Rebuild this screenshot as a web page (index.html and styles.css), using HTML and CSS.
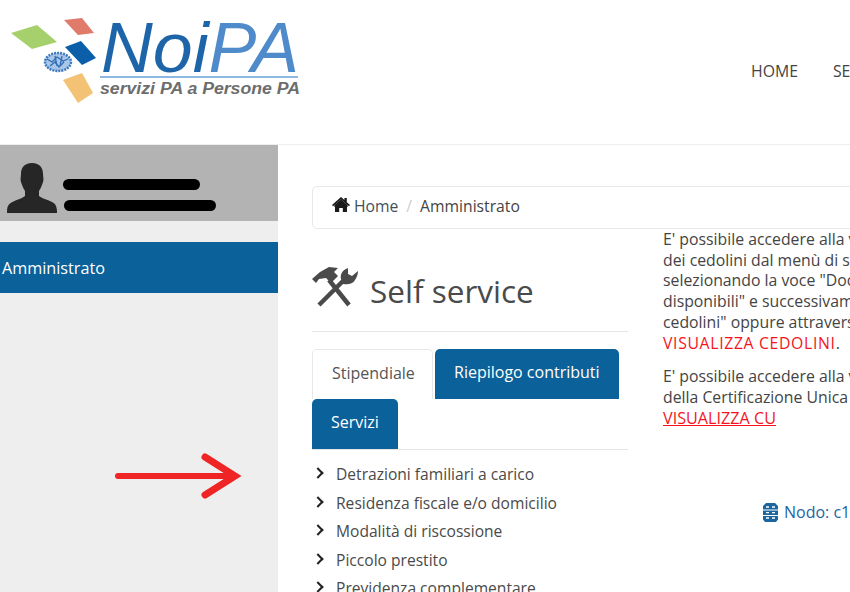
FILE: index.html
```html
<!DOCTYPE html>
<html lang="it">
<head>
<meta charset="utf-8">
<title>NoiPA - Self service</title>
<link rel="stylesheet" href="styles.css">
</head>
<body>
<header class="topbar">
  <svg class="logo" width="310" height="110" viewBox="0 0 310 110" aria-label="NoiPA">
    <polygon points="11,33 37,25 57,42 32,49" fill="#a5d06c"/>
    <polygon points="64,20 82,18 94,33 78,35" fill="#e07b6c"/>
    <polygon points="65,47 81,41 96,58 82,65" fill="#0b5ea8"/>
    <polygon points="63,80 82,73 93,93 78,103" fill="#f3c274"/>
    <ellipse cx="58" cy="62" rx="13" ry="9" fill="#a9c6e8" stroke="#3f78bd" stroke-width="2.500" stroke-dasharray="2 1"/>
    <path d="M47 59l5 3 5-5 6 4 5-2M50 66l5-4 4 5 5-5M55 56l2 10M62 56l-2 10" fill="none" stroke="#2f6cb5" stroke-width="1.300"/>
    <text class="logo-name" x="101" y="72" textLength="198" lengthAdjust="spacingAndGlyphs"><tspan class="logo-noi">Noi</tspan><tspan class="logo-pa">PA</tspan></text>
    <rect x="100" y="76" width="198" height="2" fill="#8db8e4"/>
    <text class="logo-tag" x="100" y="94" textLength="200" lengthAdjust="spacingAndGlyphs">servizi PA a Persone PA</text>
  </svg>
  <nav class="topnav">
    <a>HOME</a>
    <a>SERVIZI</a>
  </nav>
</header>

<div class="layout">
  <aside class="sidebar">
    <div class="profile">
      <svg class="avatar" width="50" height="50" viewBox="0 0 50 50">
        <path d="M25 0c8 0 11 5 11 11 0 3 1 5 0 8-1 3-2 6-4 9v5c3 3 16 5 17 10 1 3 1 5 1 7H0c0-3 0-5 1-7 2-5 14-7 17-10v-5c-2-3-3-6-4-9-1-3 0-5 0-8C14 5 17 0 25 0z" fill="#262626"/>
      </svg>
      <div class="redacted">
        <span class="bar bar-name"></span>
        <span class="bar bar-role"></span>
      </div>
    </div>
    <a class="side-item">Amministrato</a>
  </aside>

  <main class="content">
    <div class="breadcrumb">
      <svg class="home-icon" width="18" height="15" viewBox="0 0 18 15">
        <path d="M9 0l3.400 3V1h2.400v4.200L18 8l-1 1.200L9 2.400 1 9.200 0 8zM3 9l6-5 6 5v6h-4.200v-4H7.200v4H3z" fill="#1a1a1a"/>
        <path d="M9 2.400L2.400 8v2h13.200V8z" fill="#1a1a1a"/>
      </svg>
      <a class="crumb-link">Home</a>
      <span class="crumb-sep">/</span>
      <span class="crumb-current">Amministrato</span>
    </div>

    <div class="columns">
      <section class="left-col">
        <h1 class="title">
          <svg class="tools-icon" width="46" height="41" viewBox="0 0 46 41">
            <path d="M0 12l8-7 9-5 9 1-4 4 4 4-7 7-5-5-7 1-3 4z" fill="#4a4a4a"/>
            <path d="M17 13l20 25M7 38l25-25" fill="none" stroke="#4a4a4a" stroke-width="4.500"/>
            <path d="M36 1C30 3 28 8 29 12l2 5c5 1 10 0 12-4 2-3 3-6 3-9l-6 5-4-2z" fill="#4a4a4a"/>
          </svg>
          <span>Self service</span>
        </h1>
        <div class="tabs">
          <a class="tab tab-active">Stipendiale</a>
          <a class="tab tab-blue tab-wide">Riepilogo contributi</a>
          <a class="tab tab-blue">Servizi</a>
        </div>
        <ul class="links">
          <li>Detrazioni familiari a carico</li>
          <li>Residenza fiscale e/o domicilio</li>
          <li>Modalità di riscossione</li>
          <li>Piccolo prestito</li>
          <li>Previdenza complementare</li>
        </ul>
      </section>

      <section class="right-col">
        <p class="para">E' possibile accedere alla visualizzazione<br>dei cedolini dal menù di sinistra<br>selezionando la voce "Documenti<br>disponibili" e successivamente "I miei<br>cedolini" oppure attraverso il link<br><a class="red-link wide-link">VISUALIZZA CEDOLINI</a>.</p>
        <p class="para">E' possibile accedere alla visualizzazione<br>della Certificazione Unica attraverso il link<br><a class="red-link underlined">VISUALIZZA CU</a></p>
        <div class="node">
          <svg class="node-icon" width="15" height="19" viewBox="0 0 15 19">
            <path d="M3 0h9l3 3v3.500H0V3zM0 7.500h15V12H0zM0 13h15v3.500L13 19H2l-2-2.500z" fill="#1d659f"/>
            <path d="M3 4h3M9 4h3M3 9.700h3M9 9.700h3M3 15h3M9 15h3" stroke="#fff" stroke-width="1.300"/>
          </svg>
          <span>Nodo: c1</span>
        </div>
      </section>
    </div>
  </main>

  <svg class="arrow" width="130" height="48" viewBox="0 0 130 48">
    <path d="M6 24h117" fill="none" stroke="#ee2524" stroke-width="6" stroke-linecap="round"/>
    <path d="M93 5l30 19-30 19" fill="none" stroke="#ee2524" stroke-width="7" stroke-linecap="round"/>
  </svg>
</div>
</body>
</html>
```

FILE: styles.css
```css
* {
  box-sizing: border-box;
}

html,
body {
  margin: 0;
  height: 592px;
  overflow: hidden;
  background: #fff;
}

body {
  width: 850px;
  font-family: "Open Sans", "Liberation Sans", sans-serif;
  font-size: 15.600px;
  color: #4a4a4a;
}

.topbar {
  display: flex;
  height: 144px;
  white-space: nowrap;
}

.logo {
  flex: none;
  display: block;
}

.logo-name {
  font-family: "Liberation Sans", sans-serif;
  font-style: italic;
  font-size: 70px;
}

.logo-noi {
  fill: #1d65a8;
}

.logo-pa {
  fill: #4f8acb;
}

.logo-tag {
  font-family: "Liberation Sans", sans-serif;
  font-style: italic;
  font-weight: 700;
  font-size: 16px;
  fill: #6d6d6d;
}

.topnav {
  display: flex;
  gap: 35px;
  margin-left: 441px;
  padding-top: 60px;
  font-size: 15.800px;
  color: #444;
}

.layout {
  position: relative;
  display: flex;
  height: 448px;
  border-top: 1px solid #eee;
}

.sidebar {
  flex: none;
  width: 278px;
  background: #eee;
}

.profile {
  display: flex;
  height: 76px;
  padding: 18px 0 0 7px;
  background: #b3b3b3;
}

.avatar {
  flex: none;
  display: block;
}

.redacted {
  display: flex;
  flex-direction: column;
  gap: 10px;
  margin-left: 6px;
  padding-top: 16px;
}

.bar {
  display: block;
  height: 11px;
  border-radius: 6px;
  background: #000;
}

.bar-name {
  width: 137px;
}

.bar-role {
  width: 152px;
  margin-left: 1px;
}

.side-item {
  display: block;
  height: 51px;
  margin-top: 21px;
  padding-left: 2px;
  font-size: 16.200px;
  font-weight: 500;
  line-height: 53px;
  color: #fff;
  background: #0b6199;
}

.content {
  flex: none;
  width: 700px;
  padding: 41px 0 0 34px;
  white-space: nowrap;
}

.breadcrumb {
  display: flex;
  align-items: center;
  height: 43px;
  padding: 0 0 3px 19px;
  border: 1px solid #e8e8e8;
  border-radius: 5px;
  font-size: 15.700px;
}

.home-icon {
  flex: none;
  margin: -3px 4px 0 0;
}

.crumb-link {
  color: #3f4f5c;
}

.crumb-sep {
  margin: 0 8px;
  color: #ccc;
}

.crumb-current {
  color: #444;
}

.columns {
  display: flex;
  gap: 35px;
}

.left-col {
  flex: none;
  width: 316px;
}

.title {
  display: flex;
  align-items: center;
  gap: 12px;
  height: 103px;
  margin: 0;
  padding-top: 20px;
  border-bottom: 1px solid #e6e6e6;
  font-size: 31.500px;
  font-weight: 400;
  color: #4a4a4a;
}

.tools-icon {
  flex: none;
  margin-top: -6px;
}

.tabs {
  display: flex;
  flex-wrap: wrap;
  margin-top: 17px;
  border-bottom: 1px solid #e6e6e6;
}

.tab {
  display: block;
  height: 50px;
  padding: 0 19px;
  border-radius: 5px 5px 0 0;
  line-height: 47px;
  font-size: 16px;
}

.tab-active {
  width: 121px;
  border: 1px solid #e8e8e8;
  border-bottom: 0;
  color: #555;
}

.tab-blue {
  background: #0b6199;
  color: #fff;
  font-weight: 500;
}

.tab-wide {
  width: 184px;
  margin-left: 2px;
}

.links {
  margin: 10px 0 0;
  padding: 0;
  list-style: none;
}

.links li {
  position: relative;
  height: 28.500px;
  padding-left: 24px;
  line-height: 28.500px;
  color: #4a4a4a;
}

.links li::before {
  content: "";
  position: absolute;
  left: 2px;
  top: 9px;
  width: 6px;
  height: 6px;
  border-top: 2px solid #222;
  border-right: 2px solid #222;
  transform: rotate(45deg);
}

.right-col {
  flex: none;
  width: 340px;
}

.para {
  margin: 0 0 13px;
  font-size: 15.800px;
  line-height: 20.700px;
  color: #444;
}

.red-link {
  color: #f5141e;
}

.wide-link {
  letter-spacing: 0.650px;
}

.underlined {
  text-decoration: underline;
  font-size: 16.200px;
}

.node {
  display: flex;
  align-items: center;
  gap: 6px;
  margin: 73px 0 0 100px;
  font-size: 16px;
  color: #1d659f;
}

.node-icon {
  flex: none;
}

.arrow {
  position: absolute;
  left: 112px;
  top: 307px;
}
```
